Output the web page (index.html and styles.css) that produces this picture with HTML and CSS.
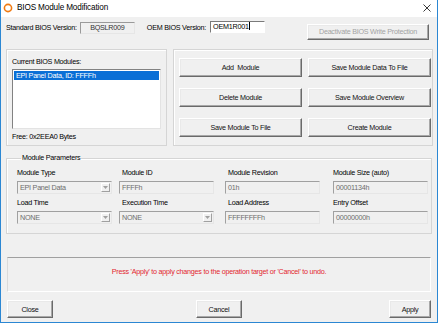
FILE: index.html
```html
<!DOCTYPE html>
<html>
<head>
<meta charset="utf-8">
<title>BIOS Module Modification</title>
<link rel="stylesheet" href="styles.css">
</head>
<body>
<div class="window">
  <div class="titlebar">
    <svg class="app-icon" width="10" height="10" viewBox="0 0 10 10"><circle cx="5" cy="5" r="3.6" fill="#fff" stroke="#f07a12" stroke-width="1.6"/></svg>
    <span class="title">BIOS Module Modification</span>
    <svg class="close-x" width="8" height="8" viewBox="0 0 8 8"><path d="M0.5 0.5 L7.5 7.5 M7.5 0.5 L0.5 7.5" stroke="#222" stroke-width="0.9"/></svg>
  </div>
  <div class="client">
    <div class="version-row">
      <span class="lbl std-lbl">Standard BIOS Version:</span>
      <span class="static-box">BQSLR009</span>
      <span class="lbl oem-lbl">OEM BIOS Version:</span>
      <span class="edit">OEM1R001<span class="caret"></span></span>
      <span class="btn disabled deact">Deactivate BIOS Write Protection</span>
    </div>
    <div class="panels">
      <div class="panel modules">
        <div class="lbl">Current BIOS Modules:</div>
        <div class="listbox"><div class="item sel">EPI Panel Data, ID: FFFFh</div></div>
        <div class="lbl free">Free: 0x2EEA0 Bytes</div>
      </div>
      <div class="panel actions">
        <span class="btn">Add &nbsp;Module</span>
        <span class="btn">Save Module Data To File</span>
        <span class="btn">Delete Module</span>
        <span class="btn">Save Module Overview</span>
        <span class="btn">Save Module To File</span>
        <span class="btn">Create Module</span>
      </div>
    </div>
    <fieldset class="params">
      <legend>Module Parameters</legend>
      <div class="param-grid">
        <div class="field"><div class="lbl">Module Type</div><div class="combo"><span class="val">EPI Panel Data</span><span class="drop"><svg width="5" height="3" viewBox="0 0 5 3"><path d="M0 0 L5 0 L2.5 3 Z" fill="#a0a0a0"/></svg></span></div></div>
        <div class="field f2"><div class="lbl">Module ID</div><div class="ro">FFFFh</div></div>
        <div class="field f3"><div class="lbl">Module Revision</div><div class="ro">01h</div></div>
        <div class="field"><div class="lbl">Module Size (auto)</div><div class="ro">00001134h</div></div>
        <div class="field"><div class="lbl">Load Time</div><div class="combo"><span class="val">NONE</span><span class="drop"><svg width="5" height="3" viewBox="0 0 5 3"><path d="M0 0 L5 0 L2.5 3 Z" fill="#a0a0a0"/></svg></span></div></div>
        <div class="field f2"><div class="lbl">Execution Time</div><div class="combo"><span class="val">NONE</span><span class="drop"><svg width="5" height="3" viewBox="0 0 5 3"><path d="M0 0 L5 0 L2.5 3 Z" fill="#a0a0a0"/></svg></span></div></div>
        <div class="field f3"><div class="lbl">Load Address</div><div class="ro">FFFFFFFFh</div></div>
        <div class="field"><div class="lbl">Entry Offset</div><div class="ro">00000000h</div></div>
      </div>
    </fieldset>
    <div class="message">Press 'Apply' to apply changes to the operation target or 'Cancel' to undo.</div>
    <div class="footer">
      <span class="btn fbtn close-btn">Close</span>
      <span class="btn fbtn cancel-btn">Cancel</span>
      <span class="btn fbtn apply-btn">Apply</span>
    </div>
  </div>
</div>
</body>
</html>
```
FILE: styles.css
```css
* { box-sizing: border-box; }
html, body { margin: 0; padding: 0; background: #f0f0f0; }
body {
  font-family: "Liberation Sans", Arial, sans-serif;
  font-size: 7.2px;
  letter-spacing: -0.25px;
  color: #000;
}
.window {
  width: 438px;
  height: 323px;
  background: #f0f0f0;
  border: 1px solid #2b87d3;
  border-top: none;
  overflow: hidden;
}
.titlebar {
  height: 17px;
  background: #fff;
  display: flex;
  align-items: center;
  padding-left: 2px;
}
.app-icon { flex: none; margin-top: -1px; }
.title {
  margin-left: 4px;
  font-size: 8.2px;
  letter-spacing: -0.15px;
  color: #000;
  flex: 1;
  margin-top: -2px;
}
.close-x { margin-right: 6px; margin-top: -2px; }

.client { padding: 0 4px 0 5px; }
.lbl { line-height: 10px; white-space: nowrap; }

.version-row {
  height: 32px;
  display: flex;
  align-items: flex-start;
  padding-top: 4px;
}
.version-row .lbl { line-height: 13px; margin-top: 0; }
.static-box {
  margin-left: 3px;
  width: 55px;
  height: 12px;
  line-height: 10px;
  text-align: center;
  border: 1px solid;
  border-color: #9a9a9a #e6e6e6 #e6e6e6 #9a9a9a;
  color: #333;
  margin-top: 0.5px;
}
.oem-lbl { margin-left: 12px; }
.edit {
  margin-left: 4px;
  width: 55px;
  height: 12px;
  background: #fff;
  border: 1px solid;
  border-color: #7a7a7a #fff #fff #7a7a7a;
  line-height: 10px;
  padding-left: 2px;
}
.caret {
  display: inline-block;
  width: 1px;
  height: 8px;
  background: #000;
  vertical-align: -1px;
  margin-left: 0.5px;
}
.btn {
  display: flex;
  align-items: center;
  justify-content: center;
  background: #f0f0f0;
  border: 1px solid;
  border-color: #fff #6a6a6a #6a6a6a #fff;
  box-shadow: inset -1px -1px #a8a8a8, inset 1px 1px #e9e9e9;
  white-space: nowrap;
  color: #111;
}
.btn.disabled { color: #a3a3a3; }
.deact {
  margin-left: auto;
  margin-right: 4px;
  margin-top: 2.5px;
  width: 122px;
  height: 16px;
}

.panels {
  display: flex;
  gap: 6px;
  height: 97px;
}
.panel {
  border: 1px solid #d5d5d5;
  box-shadow: inset 1px 1px #fff;
}
.modules {
  width: 161px;
  padding: 7px 5px 0 5px;
}
.listbox {
  margin-top: 2px;
  height: 60px;
  width: 149px;
  background: #fff;
  border: 1px solid;
  border-color: #828282 #e3e3e3 #e3e3e3 #828282;
  padding: 1px;
}
.item { height: 9px; line-height: 9px; padding-left: 2px; }
.item.sel { background: #0a6fd6; color: #fff; }
.free { margin-top: 3px; }
.actions {
  flex: 1;
  padding: 8px 0 0 5px;
  display: grid;
  grid-template-columns: 123px 123px;
  grid-auto-rows: 19px;
  column-gap: 6px;
  row-gap: 11px;
  align-content: start;
}

.params {
  margin: 8px 1px 0 0;
  padding: 6px 5px 6px 10px;
  border: 1px solid #d5d5d5;
  box-shadow: inset 1px 1px #fff;
  height: 80px;
  min-width: 0;
}
.params legend {
  padding: 0 1px;
  margin-left: 4px;
  line-height: 8px;
}
.param-grid {
  display: grid;
  grid-template-columns: 105px 106px 105px 95px;
  row-gap: 4px;
}
.field .lbl { line-height: 10px; margin-bottom: 3px; }
.f2 { margin-left: -3px; }
.f2 .lbl { padding-left: 3px; }
.f3 { margin-left: -3px; }
.f3 .lbl { padding-left: 3px; }
.ro, .combo {
  width: 95px;
  height: 13px;
  border: 1px solid;
  border-color: #a0a0a0 #e6e6e6 #e6e6e6 #a0a0a0;
  color: #6d6d6d;
  line-height: 11px;
  padding-left: 2px;
  background: #f0f0f0;
}
.combo {
  display: flex;
  justify-content: space-between;
  padding-right: 1px;
}
.drop {
  width: 9px;
  height: 9px;
  margin-top: 1px;
  border: 1px solid;
  border-color: #fff #a0a0a0 #a0a0a0 #fff;
  display: flex;
  align-items: center;
  justify-content: center;
}
.drop svg { display: block; }

.message {
  margin: 23px 2px 0 1px;
  height: 35px;
  border: 1px solid;
  border-color: #a0a0a0 #fff #fff #dadada;
  color: #e3262f;
  text-align: center;
  padding-top: 9px;
  line-height: 9px;
}
.footer {
  margin-top: 8px;
  display: flex;
  align-items: flex-start;
  padding: 0 2px 0 1px;
}
.fbtn { height: 18px; }
.close-btn { width: 46px; }
.cancel-btn { width: 46px; margin-left: 143px; }
.apply-btn { width: 42px; margin-left: auto; }
```
